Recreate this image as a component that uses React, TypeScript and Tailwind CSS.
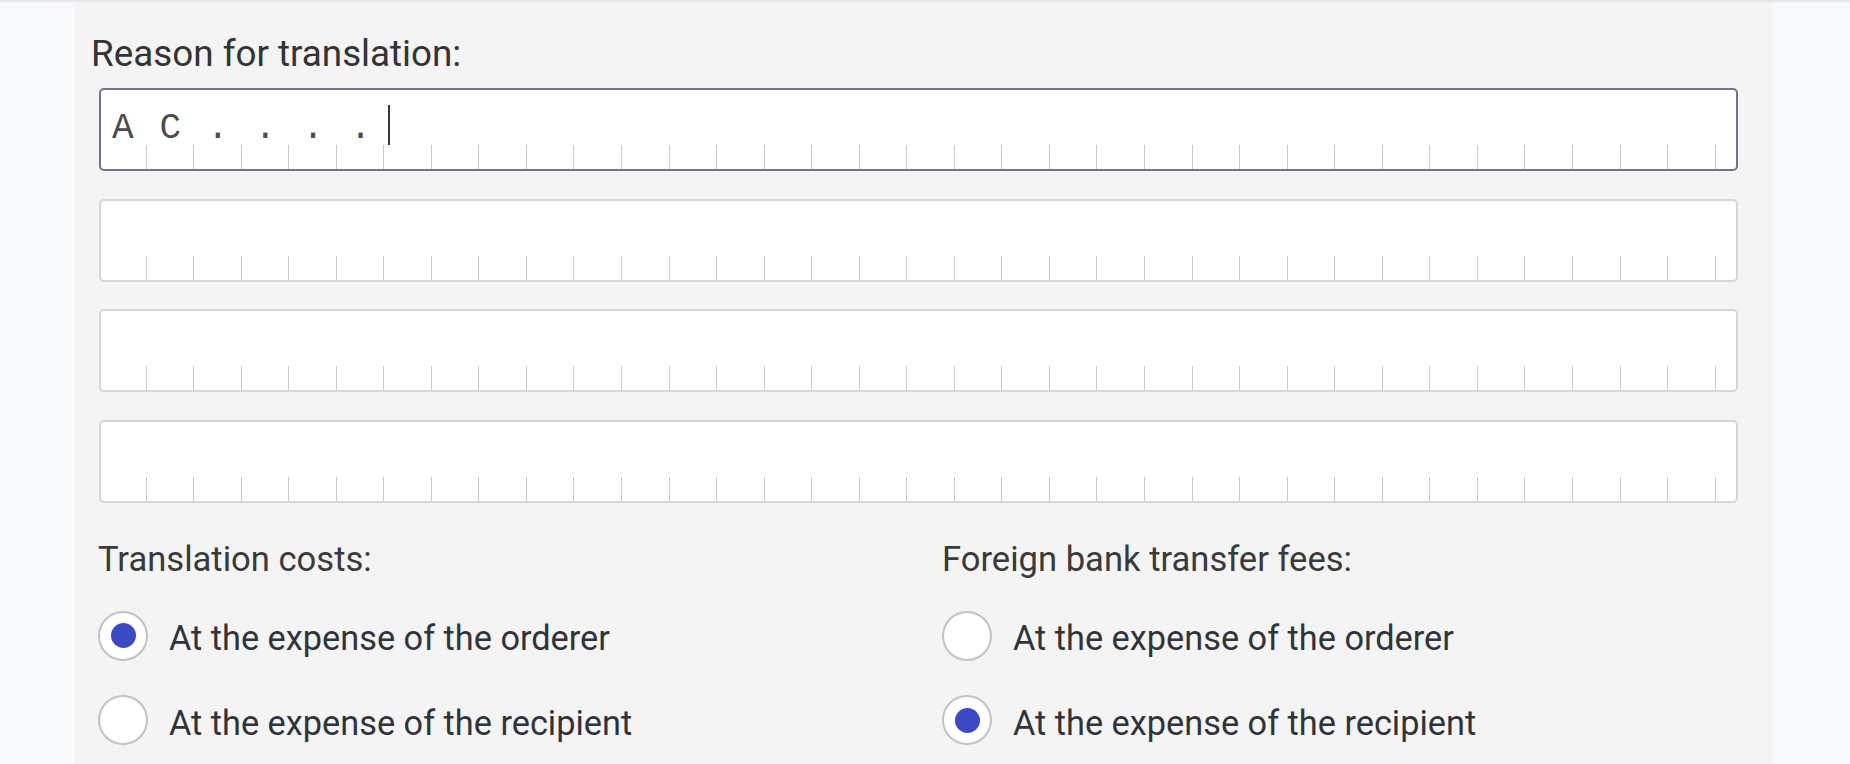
import type { ReactNode } from 'react';

const CELL_COUNT = 34;

const LINES: string[][] = [['A', 'C', '.', '.', '.', '.'], [], [], []];

function CombInput({ chars, focused }: { chars: string[]; focused?: boolean }) {
  return (
    <div
      className={
        'flex h-[83px] w-[1639px] overflow-hidden rounded-[5px] border-2 bg-white ' +
        (focused ? 'border-[#72728c]' : 'border-[#d6d6d6]')
      }
    >
      <div className="-ml-[2px] flex h-full">
        {Array.from({ length: CELL_COUNT }).map((_, i) => (
          <div key={i} className="flex h-full w-[47.55px] shrink-0 flex-col">
            <div className="flex h-[55px] flex-col items-center">
              {focused && i === chars.length ? (
                <div className="mt-[15px] ml-[4px] h-[47px] w-[2px] self-start bg-[#3a3a3a]" />
              ) : (
                <span className="mt-[21px] font-['Liberation_Mono',monospace] text-[36px] leading-[36px] text-[#4d4d4d]">
                  {chars[i] ?? ''}
                </span>
              )}
            </div>
            <div className="mt-auto h-[24px] w-full border-r-[1.5px] border-[#c8c8c8]" />
          </div>
        ))}
      </div>
    </div>
  );
}

function Radio({ checked, children }: { checked?: boolean; children: ReactNode }) {
  return (
    <label className="flex h-[50px] items-center">
      <span className="flex h-[50px] w-[50px] shrink-0 items-center justify-center rounded-full border-[2.5px] border-[#c2c2c2] bg-white">
        {checked && <span className="h-[25px] w-[25px] rounded-full bg-[#3c49c2]" />}
      </span>
      <span className="mt-[6px] ml-[21px] text-[34.3px] leading-[35px] text-[#30343a]">{children}</span>
    </label>
  );
}

function RadioGroup({ title, value }: { title: string; value: 'orderer' | 'recipient' }) {
  return (
    <div className="flex flex-col">
      <h3 className="text-[34.6px] leading-[35px] text-[#3a3a3a]">{title}</h3>
      <div className="mt-[34px] flex flex-col gap-[34.5px]">
        <Radio checked={value === 'orderer'}>At the expense of the orderer</Radio>
        <Radio checked={value === 'recipient'}>At the expense of the recipient</Radio>
      </div>
    </div>
  );
}

export default function App() {
  return (
    <div className="flex h-[764px] w-full border-t-2 border-[#e6e6ea] bg-[#f8f9fb] font-['Roboto',sans-serif]">
      <main className="ml-[75px] flex h-full w-[1697px] flex-col bg-[#f4f4f4] pt-[34px]">
        <h2 className="ml-[16px] text-[36.8px] leading-[35px] text-[#333]">Reason for translation:</h2>

        <div className="mt-[17px] ml-[24px] flex flex-col gap-[27.5px]">
          {LINES.map((chars, i) => (
            <CombInput key={i} chars={chars} focused={i === 0} />
          ))}
        </div>

        <div className="mt-[39px] ml-[23px] grid w-[1639px] grid-cols-[844px_1fr]">
          <RadioGroup title="Translation costs:" value="orderer" />
          <RadioGroup title="Foreign bank transfer fees:" value="recipient" />
        </div>
      </main>
    </div>
  );
}
